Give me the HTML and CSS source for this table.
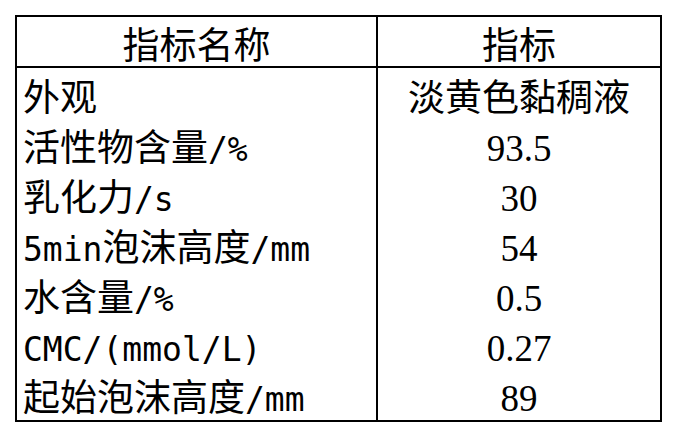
FILE: index.html
```html
<!DOCTYPE html>
<html>
<head>
  <meta charset="utf-8">
  <title>指标</title>
  <link rel="stylesheet" href="styles.css">
</head>
<body>
  <table class="spec-table">
    <thead>
      <tr>
        <th class="name-col">指标名称</th>
        <th class="value-col">指标</th>
      </tr>
    </thead>
    <tbody>
      <tr>
        <td class="name-col">外观</td>
        <td class="value-col">淡黄色黏稠液</td>
      </tr>
      <tr>
        <td class="name-col">活性物含量<span class="en">/%</span></td>
        <td class="value-col"><span class="num">93.5</span></td>
      </tr>
      <tr>
        <td class="name-col">乳化力<span class="en">/s</span></td>
        <td class="value-col"><span class="num">30</span></td>
      </tr>
      <tr>
        <td class="name-col"><span class="en">5min</span>泡沫高度<span class="en">/mm</span></td>
        <td class="value-col"><span class="num">54</span></td>
      </tr>
      <tr>
        <td class="name-col">水含量<span class="en">/%</span></td>
        <td class="value-col"><span class="num">0.5</span></td>
      </tr>
      <tr>
        <td class="name-col"><span class="en">CMC/(mmol/L)</span></td>
        <td class="value-col"><span class="num">0.27</span></td>
      </tr>
      <tr>
        <td class="name-col">起始泡沫高度<span class="en">/mm</span></td>
        <td class="value-col"><span class="num">89</span></td>
      </tr>
    </tbody>
  </table>
</body>
</html>
```

FILE: styles.css
```css
* {
  margin: 0;
  padding: 0;
  box-sizing: border-box;
}
body {
  background: #FFFFFF;
  color: #000000;
  font-family: "Noto Sans CJK SC", "Liberation Serif", sans-serif;
  font-size: 37px;
}
.spec-table {
  margin: 15px;
  width: 647px;
  border: 2px solid #000000;
  border-collapse: separate;
  border-spacing: 0;
  table-layout: fixed;
}
.spec-table th,
.spec-table td {
  font-weight: 400;
  white-space: nowrap;
  line-height: 46px;
  padding: 4px 0 0 0;
  vertical-align: top;
}
.spec-table th {
  line-height: 45px;
  text-align: center;
  border-bottom: 2px solid #000000;
}
.spec-table .name-col {
  width: 361px;
  border-right: 2px solid #000000;
}
.spec-table td.name-col {
  padding-left: 6px;
}
.spec-table .value-col {
  text-align: center;
}
.spec-table tbody tr:last-child td {
  padding-bottom: 2px;
}
.en {
  font-family: "DejaVu Sans Mono", monospace;
  font-size: 33px;
  line-height: 1;
}
.num {
  font-family: "Liberation Serif", serif;
  font-size: 37px;
  line-height: 1;
}
```
